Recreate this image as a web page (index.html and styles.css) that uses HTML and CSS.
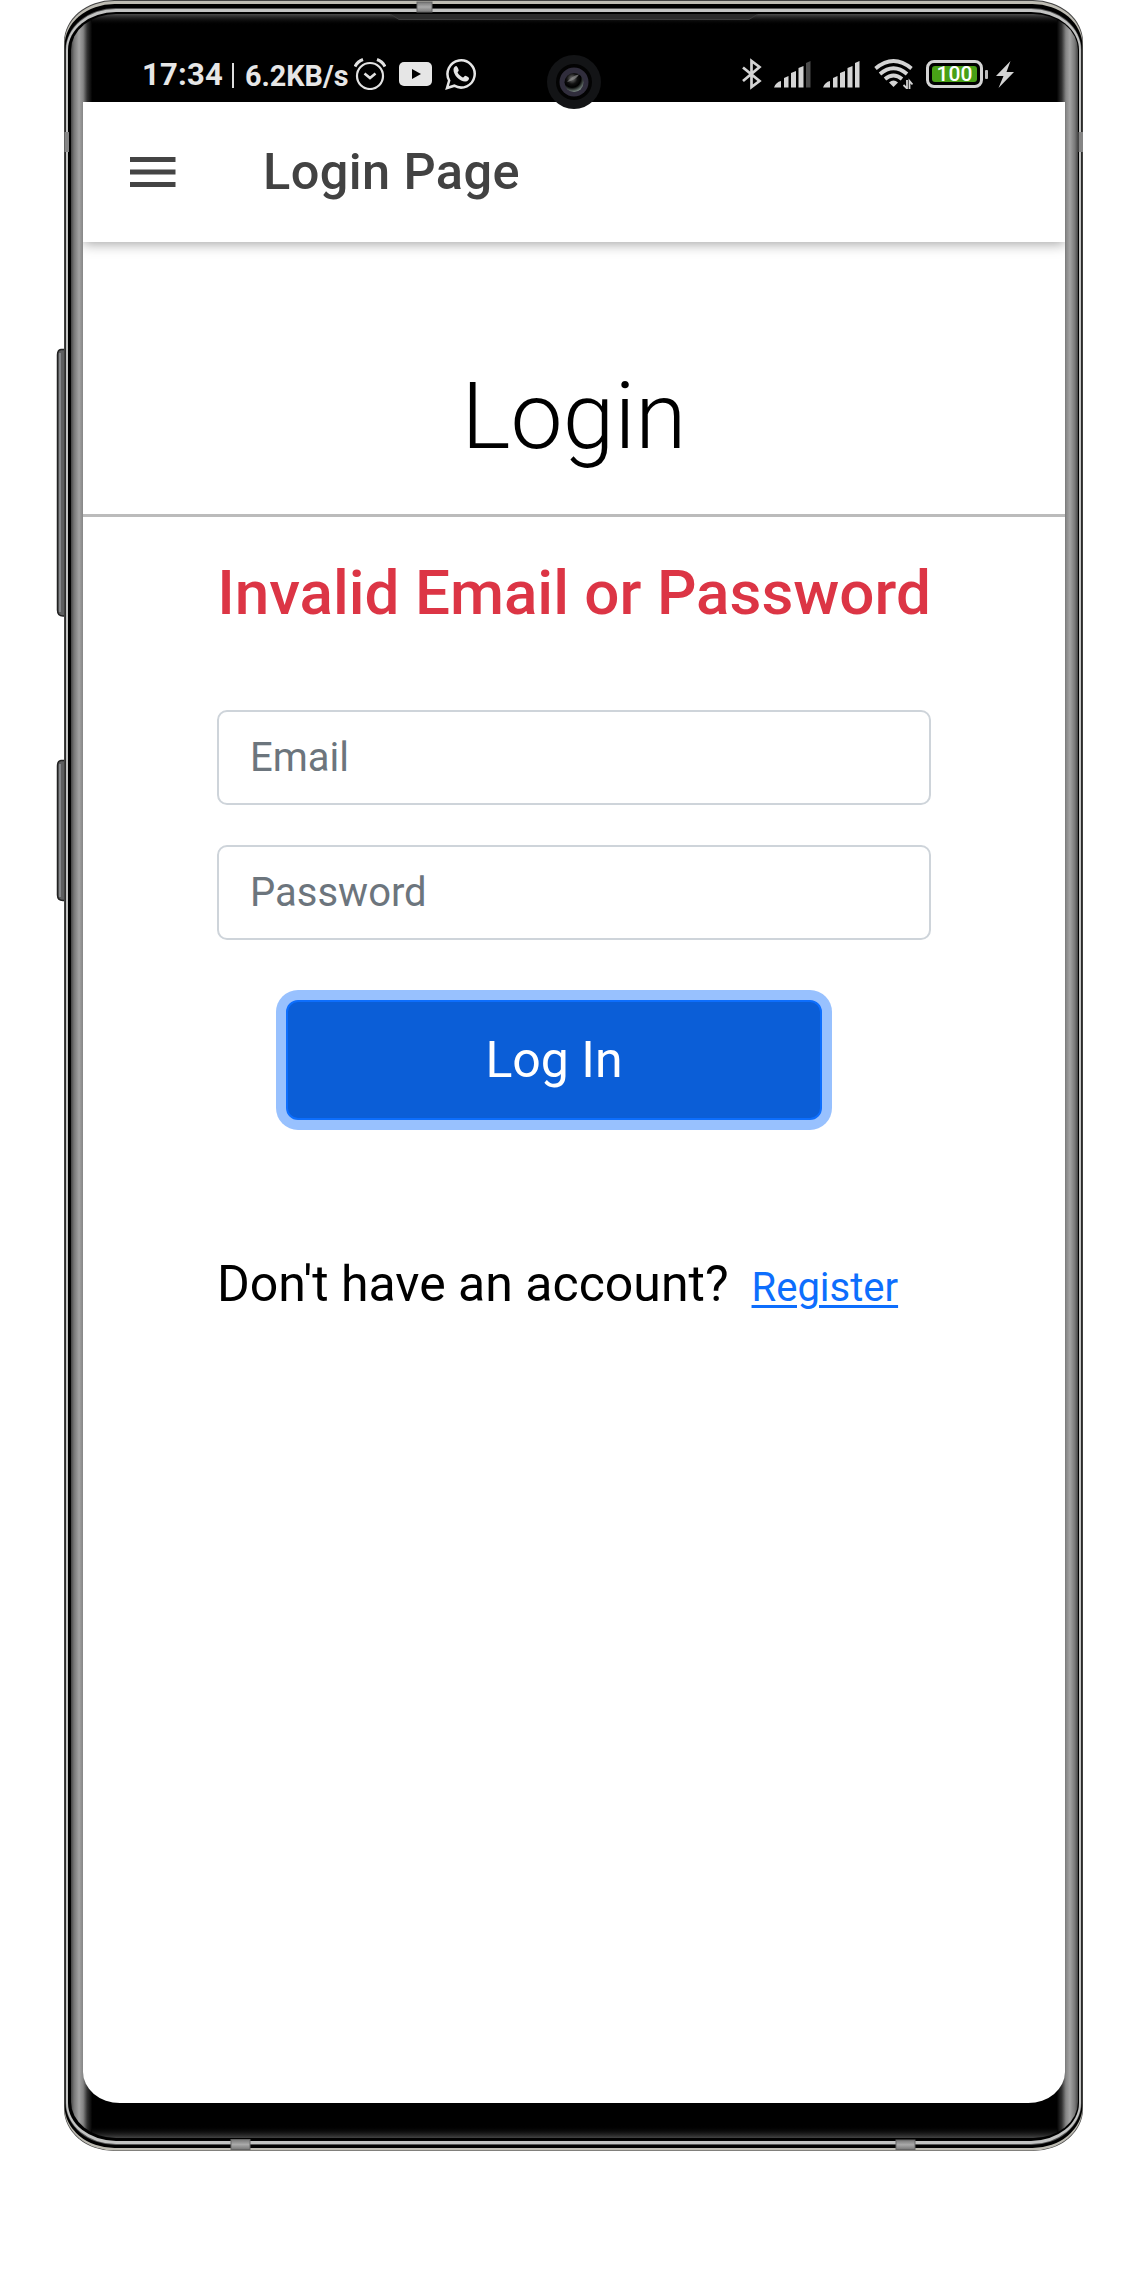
FILE: index.html
```html
<!DOCTYPE html>
<html lang="en">
<head>
<meta charset="utf-8">
<title>Login Page</title>
<link rel="stylesheet" href="styles.css">
</head>
<body>
<div class="phone">
  <svg class="frame" width="1140" height="2280" viewBox="0 0 1140 2280" aria-hidden="true">
    <defs>
      <linearGradient id="sides" gradientUnits="userSpaceOnUse" x1="70" y1="0" x2="1079" y2="0">
        <stop offset="0" stop-color="#333"/>
        <stop offset=".004" stop-color="#777"/>
        <stop offset=".009" stop-color="#a3a3a3"/>
        <stop offset=".013" stop-color="#858585"/>
        <stop offset=".017" stop-color="#333"/>
        <stop offset=".022" stop-color="#000"/>
        <stop offset=".978" stop-color="#000"/>
        <stop offset=".983" stop-color="#333"/>
        <stop offset=".987" stop-color="#858585"/>
        <stop offset=".991" stop-color="#a3a3a3"/>
        <stop offset=".996" stop-color="#777"/>
        <stop offset="1" stop-color="#333"/>
      </linearGradient>
      <linearGradient id="topEdge" x1="0" y1="0" x2="0" y2="1">
        <stop offset="0" stop-color="#4c4c4c"/>
        <stop offset="1" stop-color="#000" stop-opacity="0"/>
      </linearGradient>
      <linearGradient id="bottomEdge" x1="0" y1="1" x2="0" y2="0">
        <stop offset="0" stop-color="#444"/>
        <stop offset="1" stop-color="#000" stop-opacity="0"/>
      </linearGradient>
      <linearGradient id="metal" x1="0" y1="0" x2="0" y2="1">
        <stop offset="0" stop-color="#777"/>
        <stop offset=".5" stop-color="#aaa"/>
        <stop offset="1" stop-color="#777"/>
      </linearGradient>
      <radialGradient id="lens" cx=".4" cy=".3" r=".7">
        <stop offset="0" stop-color="#777"/>
        <stop offset=".4" stop-color="#111"/>
        <stop offset=".65" stop-color="#000"/>
        <stop offset="1" stop-color="#77857f"/>
      </radialGradient>
      <clipPath id="body"><rect x="71" y="14" width="1007" height="2124" rx="45" ry="36"/></clipPath>
    </defs>
    <g fill="#5d5e5f" stroke="#222" stroke-width="1.5">
      <path d="M67 349.500H61Q57.500 350 57.500 355V610Q57.500 616 63 616H67Z"/>
      <path d="M67 760.500H61Q57.500 761 57.500 766V895Q57.500 900.500 63 900.500H67Z"/>
    </g>
    <path d="M60 353V612M60 764V897" stroke="#85878a" stroke-width="2"/>
    <rect x="64" y="0" width="1019" height="2151" rx="50" ry="42" fill="#444"/>
    <rect x="64.500" y="1" width="1018" height="2149.500" rx="50" ry="42" fill="#bebcb3"/>
    <rect x="64.500" y="4" width="1018" height="2144" rx="50" ry="42" fill="#000"/>
    <rect x="65.500" y="8" width="1016" height="2137" rx="50" ry="42" fill="#555"/>
    <rect x="66" y="9" width="1015" height="2135" rx="50" ry="41" fill="#c2c3c2"/>
    <rect x="68" y="12" width="1011" height="2129" rx="48" ry="38" fill="#000"/>
    <g clip-path="url(#body)">
      <rect x="70" y="14" width="1009" height="2124" fill="url(#sides)"/>
      <rect x="92" y="14" width="965" height="11" fill="url(#topEdge)"/>
      <rect x="92" y="2126" width="965" height="12" fill="url(#bottomEdge)"/>
      <path d="M390 14H758L749 19.500H399Z" fill="#2b2b2b"/>
      <path d="M391 14.500L399 19.500H749L757 14.500" fill="none" stroke="#3c3c3c"/>
    </g>
    <g fill="url(#metal)" stroke="#666">
      <rect x="417" y="2" width="15" height="10"/>
      <rect x="231" y="2139.500" width="19" height="10"/>
      <rect x="896" y="2140" width="19" height="9.500"/>
    </g>
    <path d="M64.500 132H69V152H64.500ZM1078.500 132H1083V152H1078.500Z" fill="#858585"/>
  </svg>

  <div class="display">
    <header class="status">
      <div class="status-group">
        <span class="clock">17:34</span><span class="bar"></span><span class="rate">6.2KB/s</span>
        <svg class="alarm" width="32" height="32" viewBox="0 0 32 32" fill="none" stroke="#e2e2e2" stroke-width="2.200">
          <circle cx="16" cy="18" r="13"/><path d="M10.500 15.500L16 20L21.500 15.500" stroke-width="2.600"/><path d="M1 8.500Q3.500 3.500 9 1.500M23 1.500Q28.500 3.500 31 8.500" stroke-width="3"/>
        </svg>
        <svg class="video" width="33" height="24" viewBox="0 0 33 24">
          <rect width="33" height="24" rx="5" fill="#e6e6e6"/><path d="M13 7L22 12L13 17Z" fill="#000"/>
        </svg>
        <svg class="chat" width="32" height="32" viewBox="0 0 32 32">
          <path d="M2 30L4.200 22.500A13.600 13.600 0 1 1 9.300 27.700Z" fill="none" stroke="#e6e6e6" stroke-width="2.500"/>
          <path d="M11.600 8.200C10.500 7.700 8.700 9.500 8.500 11.500C8.300 17.500 15.500 24 20.500 23.600C22.700 23.300 24.300 21.600 24 20C23.500 19 21 17.800 20.200 17.800C19.400 17.900 18.700 19.700 17.800 19.500C15.800 18.800 13.300 16.300 12.600 14.600C12.600 13.800 13.800 13.200 13.700 12.200C13.500 11.200 12.500 8.700 11.600 8.200Z" fill="#e6e6e6"/>
        </svg>
      </div>
      <div class="status-group">
        <svg width="20" height="32" viewBox="0 0 20 32" fill="none" stroke="#d4d4d4" stroke-width="2.700">
          <path d="M1 9.500L17.500 23L9.500 29V3L17.500 9L1 23"/>
        </svg>
        <svg class="signal" width="37" height="27" viewBox="0 0 37 27" fill="#d4d4d4">
          <path d="M0 26.500Q2 21 7 20V26.500ZM10 17L14.500 15V26.500H10ZM17 12L22 10V26.500H17ZM24.500 7L29.500 5V26.500H24.500Z"/><path d="M32 2L36.500 0V26.500H32Z" fill="#4b4b4b"/>
        </svg>
        <svg class="signal" width="37" height="27" viewBox="0 0 37 27" fill="#d4d4d4">
          <path d="M0 26.500Q2 21 7 20V26.500ZM10 17L14.500 15V26.500H10ZM17 12L22 10V26.500H17ZM24.500 7L29.500 5V26.500H24.500ZM32 2L36.500 0V26.500H32Z"/>
        </svg>
        <svg class="wifi" width="39" height="30" viewBox="0 0 39 30" fill="none" stroke="#d4d4d4" stroke-width="3.800">
          <path d="M1.500 9.500Q19.500-5.500 37.500 9.500"/><path d="M6 15Q19.500 3.500 33 15"/><path d="M11 20Q19.500 13 28 20"/>
          <path d="M15 23.500Q19.500 19.500 24 23.500L19.500 28Z" fill="#d4d4d4" stroke="none"/>
          <path d="M33 21V29.500L29.500 26M35.500 30V22L38.500 25.500" stroke-width="1.800"/>
        </svg>
        <span class="battery"><span class="charge">100</span></span><span class="battery-tip"></span>
        <svg class="bolt" width="18" height="27" viewBox="0 0 18 27"><path d="M14.500 0L0 15H7.500L2.500 27L18 11H10.500Z" fill="#d4d4d4"/></svg>
      </div>
    </header>
    <main class="app">
      <div class="toolbar">
        <svg class="menu" width="46" height="32" viewBox="0 0 46 32"><path d="M0 3.500H45.500M0 16H45.500M0 28.500H45.500" stroke="#444" stroke-width="5"/></svg>
        <span class="toolbar-title">Login Page</span>
      </div>
      <h1 class="heading">Login</h1>
      <form class="form">
        <p class="error">Invalid Email or Password</p>
        <input class="field" type="email" placeholder="Email">
        <input class="field" type="password" placeholder="Password">
        <button class="submit" type="button">Log In</button>
        <p class="signup"><span class="question">Don't have an account?</span><a class="register" href="#">Register</a></p>
      </form>
    </main>
  </div>

  <svg class="camera" width="56" height="56" viewBox="0 0 56 56" aria-hidden="true">
    <circle cx="28" cy="28" r="27" fill="#131416"/><circle cx="28" cy="28" r="18" fill="#030303"/>
    <circle cx="28" cy="28" r="14.500" fill="#302d3c"/><circle cx="28" cy="28.500" r="9.500" fill="url(#lens)"/>
    <path d="M21 28Q27 21 33 20.500Q30 26 21 28Z" fill="#8a8a8a" opacity=".7"/>
  </svg>
</div>
</body>
</html>
```
FILE: styles.css
```css
* { box-sizing: border-box; }

body {
  margin: 0;
  background: #fff;
  font-family: Roboto, "Liberation Sans", sans-serif;
}

.phone {
  position: relative;
  width: 1140px;
  height: 2280px;
  overflow: hidden;
}

.frame {
  position: absolute;
  inset: 0;
}

.camera {
  position: absolute;
  left: 546px;
  top: 54px;
}

.display {
  position: relative;
  display: flex;
  flex-direction: column;
  width: 982px;
  height: 2103px;
  margin-left: 83px;
}

.status {
  display: flex;
  justify-content: space-between;
  height: 102px;
  padding: 58px 51px 0 59px;
  color: #e6e6e6;
}

.status-group {
  display: flex;
  align-items: center;
  height: 32px;
}

.clock {
  margin-top: 2px;
  font-size: 31px;
  font-weight: 700;
  line-height: 34px;
  letter-spacing: 0.2px;
}

.bar {
  width: 2px;
  height: 25px;
  margin: 3px 11px 0 9px;
  background: #ddd;
}

.rate {
  margin-top: 3px;
  font-size: 28.8px;
  font-weight: 700;
  line-height: 34px;
}

.alarm { margin-left: 6px; }
.video { margin-left: 13px; }
.chat { margin-left: 13px; }

.signal { margin-left: 12px; }
.wifi { margin-left: 14px; }

.battery {
  display: flex;
  width: 57px;
  height: 28px;
  margin: 0 2px 0 13px;
  padding: 3px;
  border: 3px solid #d4d4d4;
  border-radius: 8px;
}

.charge {
  flex: 1;
  border-radius: 3px;
  background: #48a016;
  color: #fff;
  font-size: 21px;
  font-weight: 500;
  line-height: 17px;
  text-align: center;
}

.battery-tip {
  width: 3px;
  height: 9px;
  border-radius: 1px;
  background: #bbb;
}

.bolt { margin-left: 8px; }

.app {
  flex: 1;
  overflow: hidden;
  border-radius: 0 0 37px 37px / 0 0 31px 31px;
  background: #fff;
}

.toolbar {
  display: flex;
  align-items: center;
  height: 140px;
  padding-left: 47px;
  box-shadow: 0 2px 12px rgba(0, 0, 0, 0.36);
}

.toolbar-title {
  margin: -2px 0 0 87px;
  color: #424242;
  font-size: 50.5px;
  font-weight: 500;
  letter-spacing: 0.4px;
}

.heading {
  height: 275px;
  margin: 0;
  padding-top: 125px;
  border-bottom: 3px solid #bbb;
  font-size: 93px;
  font-weight: 300;
  line-height: 100px;
  text-align: center;
}

.form {
  display: flex;
  flex-direction: column;
  width: 714px;
  margin-left: 134px;
}

.error {
  margin: 36px 0 77px;
  color: #dc3545;
  font-size: 62px;
  font-weight: 500;
  line-height: 80px;
  text-align: center;
  white-space: nowrap;
}

.field {
  height: 95px;
  margin-bottom: 40px;
  padding: 0 31px;
  border: 2px solid #ced4da;
  border-radius: 10px;
  outline: 0;
  background: #fff;
  font: 40px Roboto, sans-serif;
}

.field::placeholder {
  color: #6c757d;
  opacity: 1;
}

.submit {
  width: 536px;
  height: 120px;
  margin: 20px 0 0 69px;
  padding: 0 0 1px;
  border: 2px solid #0d6efd;
  border-radius: 12px;
  background: #0b5ed7;
  box-shadow: 0 0 0 10px #98c1fe;
  color: #fff;
  font: 50px Roboto, sans-serif;
}

.signup {
  display: flex;
  align-items: flex-start;
  margin: 134px 0 0;
  line-height: 60px;
  white-space: nowrap;
}

.question { font-size: 50px; }

.register {
  margin: 4px 0 0 23px;
  color: #0d6efd;
  font-size: 40px;
  text-decoration-thickness: 3px;
  text-underline-offset: 4px;
}
```
